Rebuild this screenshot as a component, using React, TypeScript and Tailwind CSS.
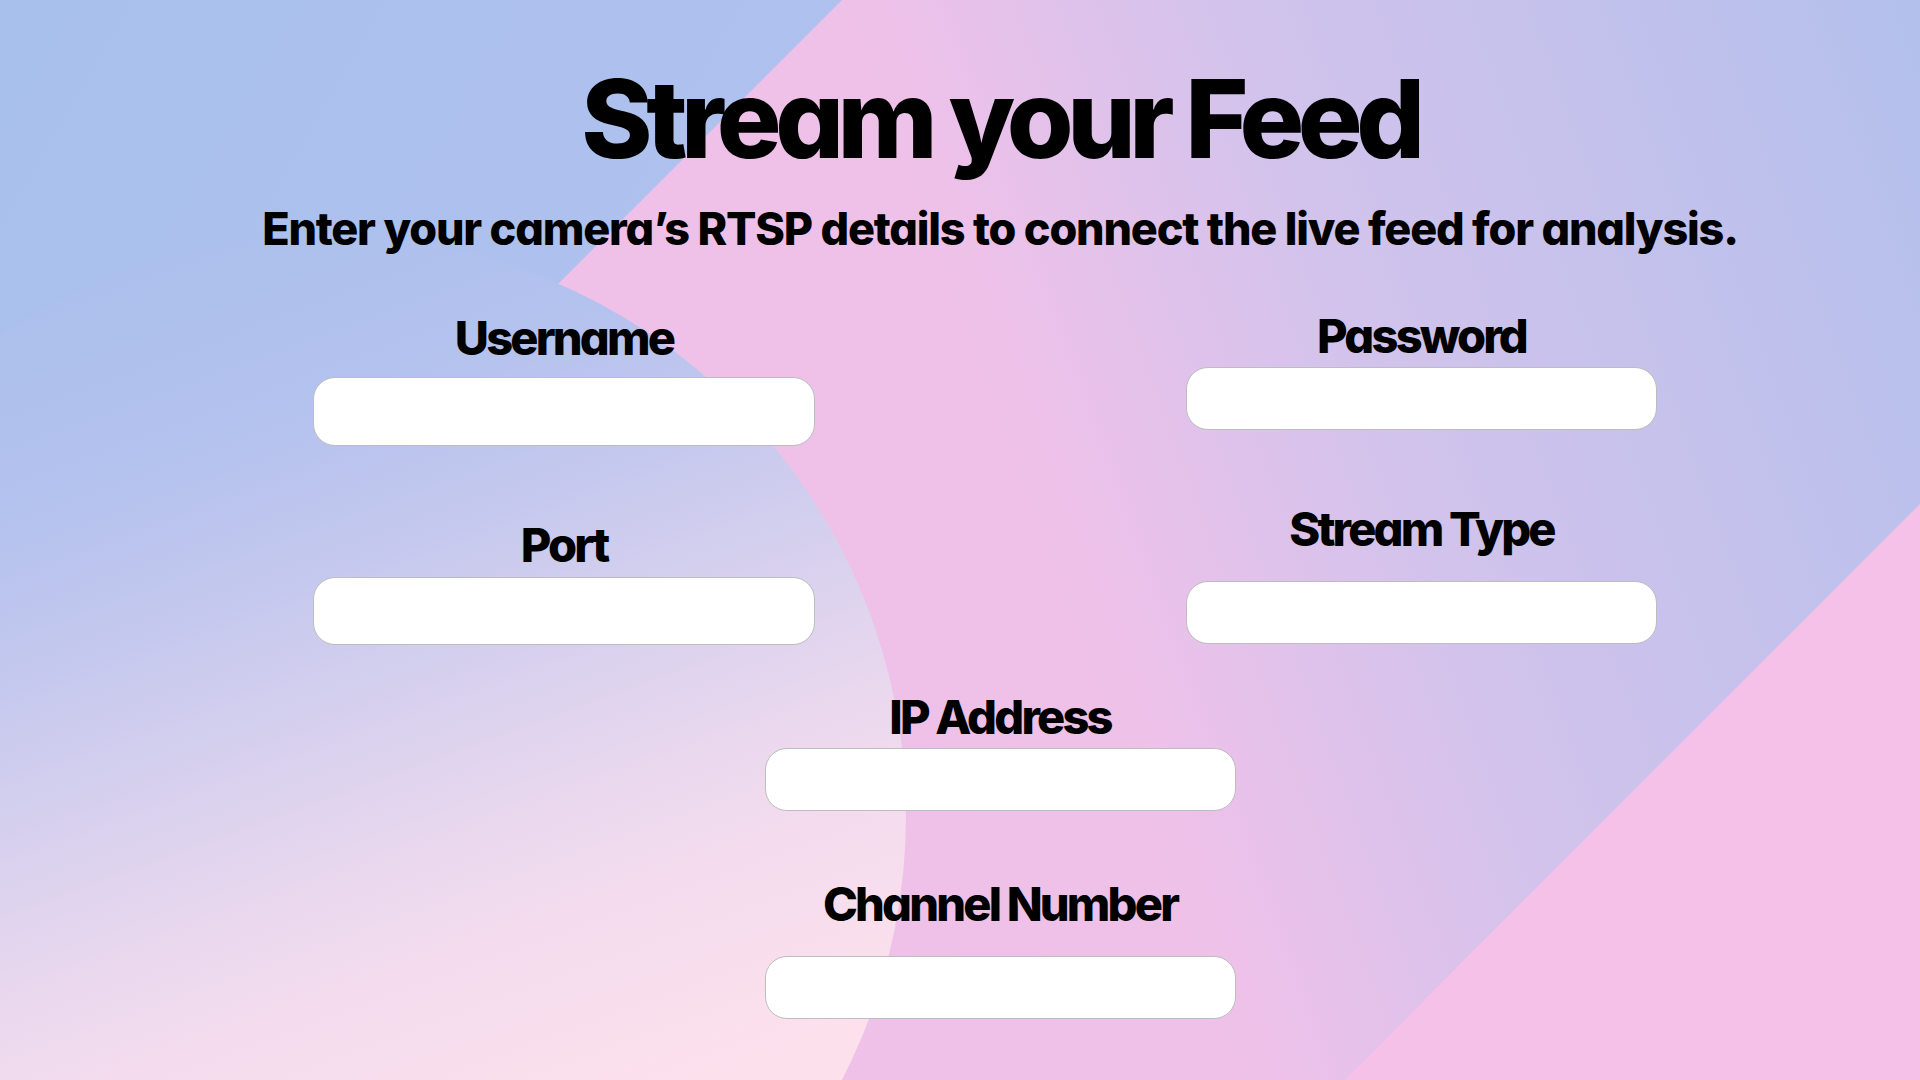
import React from 'react'

type FieldProps = {
  label: string
  labelClass: string
  inputClass: string
}

const Field: React.FC<FieldProps> = ({ label, labelClass, inputClass }) => {
  return (
    <div className="flex flex-col items-center">
      <label className={`text-[47px] leading-none font-extrabold tracking-[-0.06em] text-black whitespace-nowrap ${labelClass}`}>
        {label}
      </label>
      <input
        type="text"
        className={`bg-white border border-[#bdbdbd] rounded-[22px] outline-none px-5 text-2xl ${inputClass}`}
      />
    </div>
  )
}

const App: React.FC = () => {
  return (
    <div className="relative w-[1920px] h-[1080px] overflow-hidden font-['Inter','Noto_Sans',sans-serif] [font-feature-settings:'cv11']">
      {/* background shapes */}
      <div className="absolute inset-0 bg-[linear-gradient(120deg,#a8c0ec_0%,#b0c1ee_35%,#bcc2ee_60%)]" />
      <div className="absolute inset-0 bg-[linear-gradient(250deg,#b3c0ec_0%,#d2c3ec_30%,#eec1e9_45%,#f2c0e8_100%)] [clip-path:polygon(842px_0,1920px_0,1920px_504px,1344px_1080px,0_1080px,0_842px)]" />
      <div className="absolute inset-0 bg-[#f5c1e8] [clip-path:polygon(1920px_504px,1920px_1080px,1344px_1080px)]" />
      <div className="absolute left-[-254px] top-[235px] w-[1160px] h-[1160px] rounded-full bg-[linear-gradient(160deg,#aabfec_0%,#aec0ec_14%,#b4c2ee_24%,#c4c8ee_34%,#d6d0ee_44%,#ead8ee_55%,#f4dcee_62%,#fce0ec_75%)]" />

      <div className="relative flex flex-col">
        <div className="pl-[80px] pt-[65px] text-center">
          <h1 className="text-[108px] leading-none font-extrabold tracking-[-0.06em] text-black">
            Stream your Feed
          </h1>
          <p className="mt-[33px] text-[45px] leading-none font-extrabold tracking-[-0.027em] text-black whitespace-nowrap">
            Enter your camera’s RTSP details to connect the live feed for analysis.
          </p>
        </div>

        <div className="flex justify-center pl-[50px]">
          <div className="flex gap-[371px]">
            <div className="flex flex-col w-[502px]">
              <Field label="Username" labelClass="mt-[63px]" inputClass="mt-[16px] w-[502px] h-[69px]" />
              <Field label="Port" labelClass="mt-[75px]" inputClass="mt-[9px] w-[502px] h-[68px]" />
            </div>
            <div className="flex flex-col w-[471px]">
              <Field label="Password" labelClass="mt-[61px]" inputClass="mt-[8px] w-[471px] h-[63px]" />
              <Field label="Stream Type" labelClass="mt-[75px]" inputClass="mt-[29px] w-[471px] h-[63px]" />
            </div>
          </div>
        </div>

        <div className="flex flex-col items-center pl-[80px]">
          <Field label="IP Address" labelClass="mt-[48px]" inputClass="mt-[8px] w-[471px] h-[63px]" />
          <Field label="Channel Number" labelClass="mt-[69px]" inputClass="mt-[29px] w-[471px] h-[63px]" />
        </div>
      </div>
    </div>
  )
}

export default App
